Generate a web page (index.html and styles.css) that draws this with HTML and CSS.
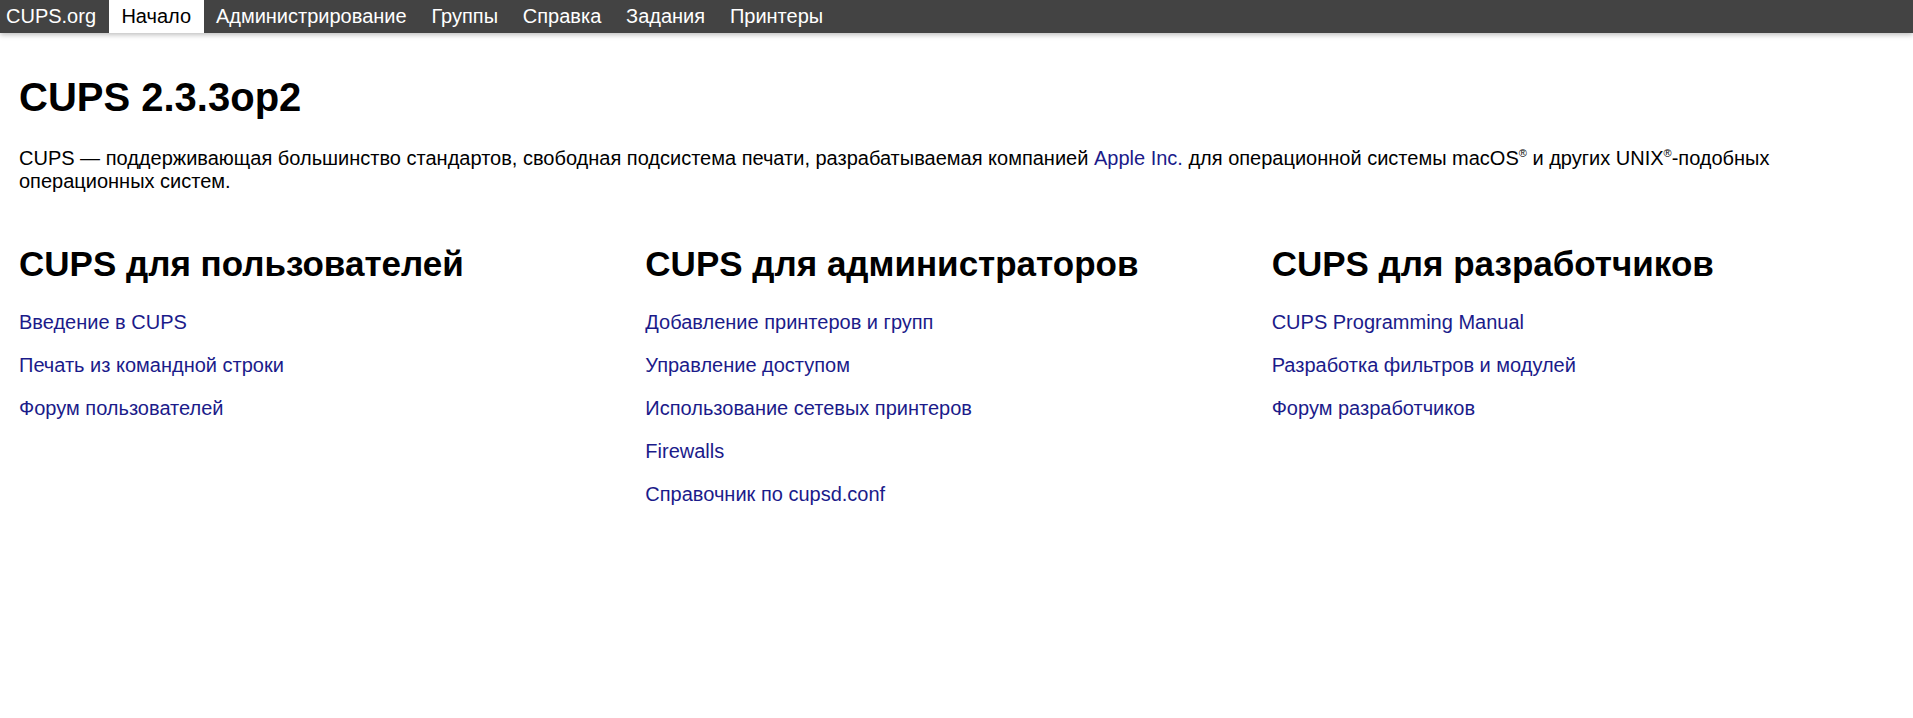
FILE: index.html
```html
<!DOCTYPE html>
<html lang="ru">
<head>
<meta charset="utf-8">
<title>Начало - CUPS 2.3.3op2</title>
<link rel="stylesheet" href="styles.css">
</head>
<body>
<div class="header">
  <ul class="nav">
    <li><a class="nav-link first" href="#">CUPS.org</a></li>
    <li><a class="nav-link active" href="#">Начало</a></li>
    <li><a class="nav-link" href="#">Администрирование</a></li>
    <li><a class="nav-link" href="#">Группы</a></li>
    <li><a class="nav-link" href="#">Справка</a></li>
    <li><a class="nav-link" href="#">Задания</a></li>
    <li><a class="nav-link" href="#">Принтеры</a></li>
  </ul>
</div>
<div class="body">
  <h1 class="title">CUPS 2.3.3op2</h1>
  <p class="lead">CUPS — поддерживающая большинство стандартов, свободная подсистема печати, разрабатываемая компанией <a class="link" href="#">Apple Inc.</a> для операционной системы macOS<sup class="reg">®</sup> и других UNIX<sup class="reg">®</sup>-подобных операционных систем.</p>
  <div class="row">
    <div class="col">
      <h2 class="col-title">CUPS для пользователей</h2>
      <p class="item"><a class="link" href="#">Введение в CUPS</a></p>
      <p class="item"><a class="link" href="#">Печать из командной строки</a></p>
      <p class="item"><a class="link" href="#">Форум пользователей</a></p>
    </div>
    <div class="col">
      <h2 class="col-title">CUPS для администраторов</h2>
      <p class="item"><a class="link" href="#">Добавление принтеров и групп</a></p>
      <p class="item"><a class="link" href="#">Управление доступом</a></p>
      <p class="item"><a class="link" href="#">Использование сетевых принтеров</a></p>
      <p class="item"><a class="link" href="#">Firewalls</a></p>
      <p class="item"><a class="link" href="#">Справочник по cupsd.conf</a></p>
    </div>
    <div class="col">
      <h2 class="col-title">CUPS для разработчиков</h2>
      <p class="item"><a class="link" href="#">CUPS Programming Manual</a></p>
      <p class="item"><a class="link" href="#">Разработка фильтров и модулей</a></p>
      <p class="item"><a class="link" href="#">Форум разработчиков</a></p>
    </div>
  </div>
</div>
</body>
</html>
```

FILE: styles.css
```css
html, body {
  margin: 0;
  padding: 0;
  background: #ffffff;
}

body {
  color: #000000;
  font-family: "Liberation Sans", Arial, sans-serif;
  font-size: 20px;
  line-height: 23px;
}

.header {
  background: #434343;
  box-shadow: 0 2px 5px rgba(0, 0, 0, 0.25);
  height: 33px;
}

.nav {
  list-style: none;
  margin: 0;
  padding: 0;
  display: flex;
}

.nav-link {
  display: block;
  padding: 5px 12.4px;
  color: #ffffff;
  text-decoration: none;
  font-size: 20px;
  line-height: 23px;
}

.nav-link.first {
  padding-left: 6px;
  padding-right: 13px;
}

.nav-link.active {
  background: #ffffff;
  color: #000000;
}

.body {
  padding: 0 15px 0 19px;
}

.title {
  margin: 41px 0 0;
  font-size: 40px;
  line-height: 46px;
  font-weight: bold;
}

.lead {
  margin: 27px 0 0;
}

.reg {
  font-size: 11px;
  line-height: 0;
  vertical-align: 8px;
}

.row {
  display: grid;
  grid-template-columns: repeat(3, 1fr);
  margin-top: 51px;
}

.col-title {
  margin: 0 0 27px;
  font-size: 35px;
  line-height: 40px;
  font-weight: bold;
}

.item {
  margin: 0 0 20px;
}

.link {
  color: #1b1b8a;
  text-decoration: none;
}
```
